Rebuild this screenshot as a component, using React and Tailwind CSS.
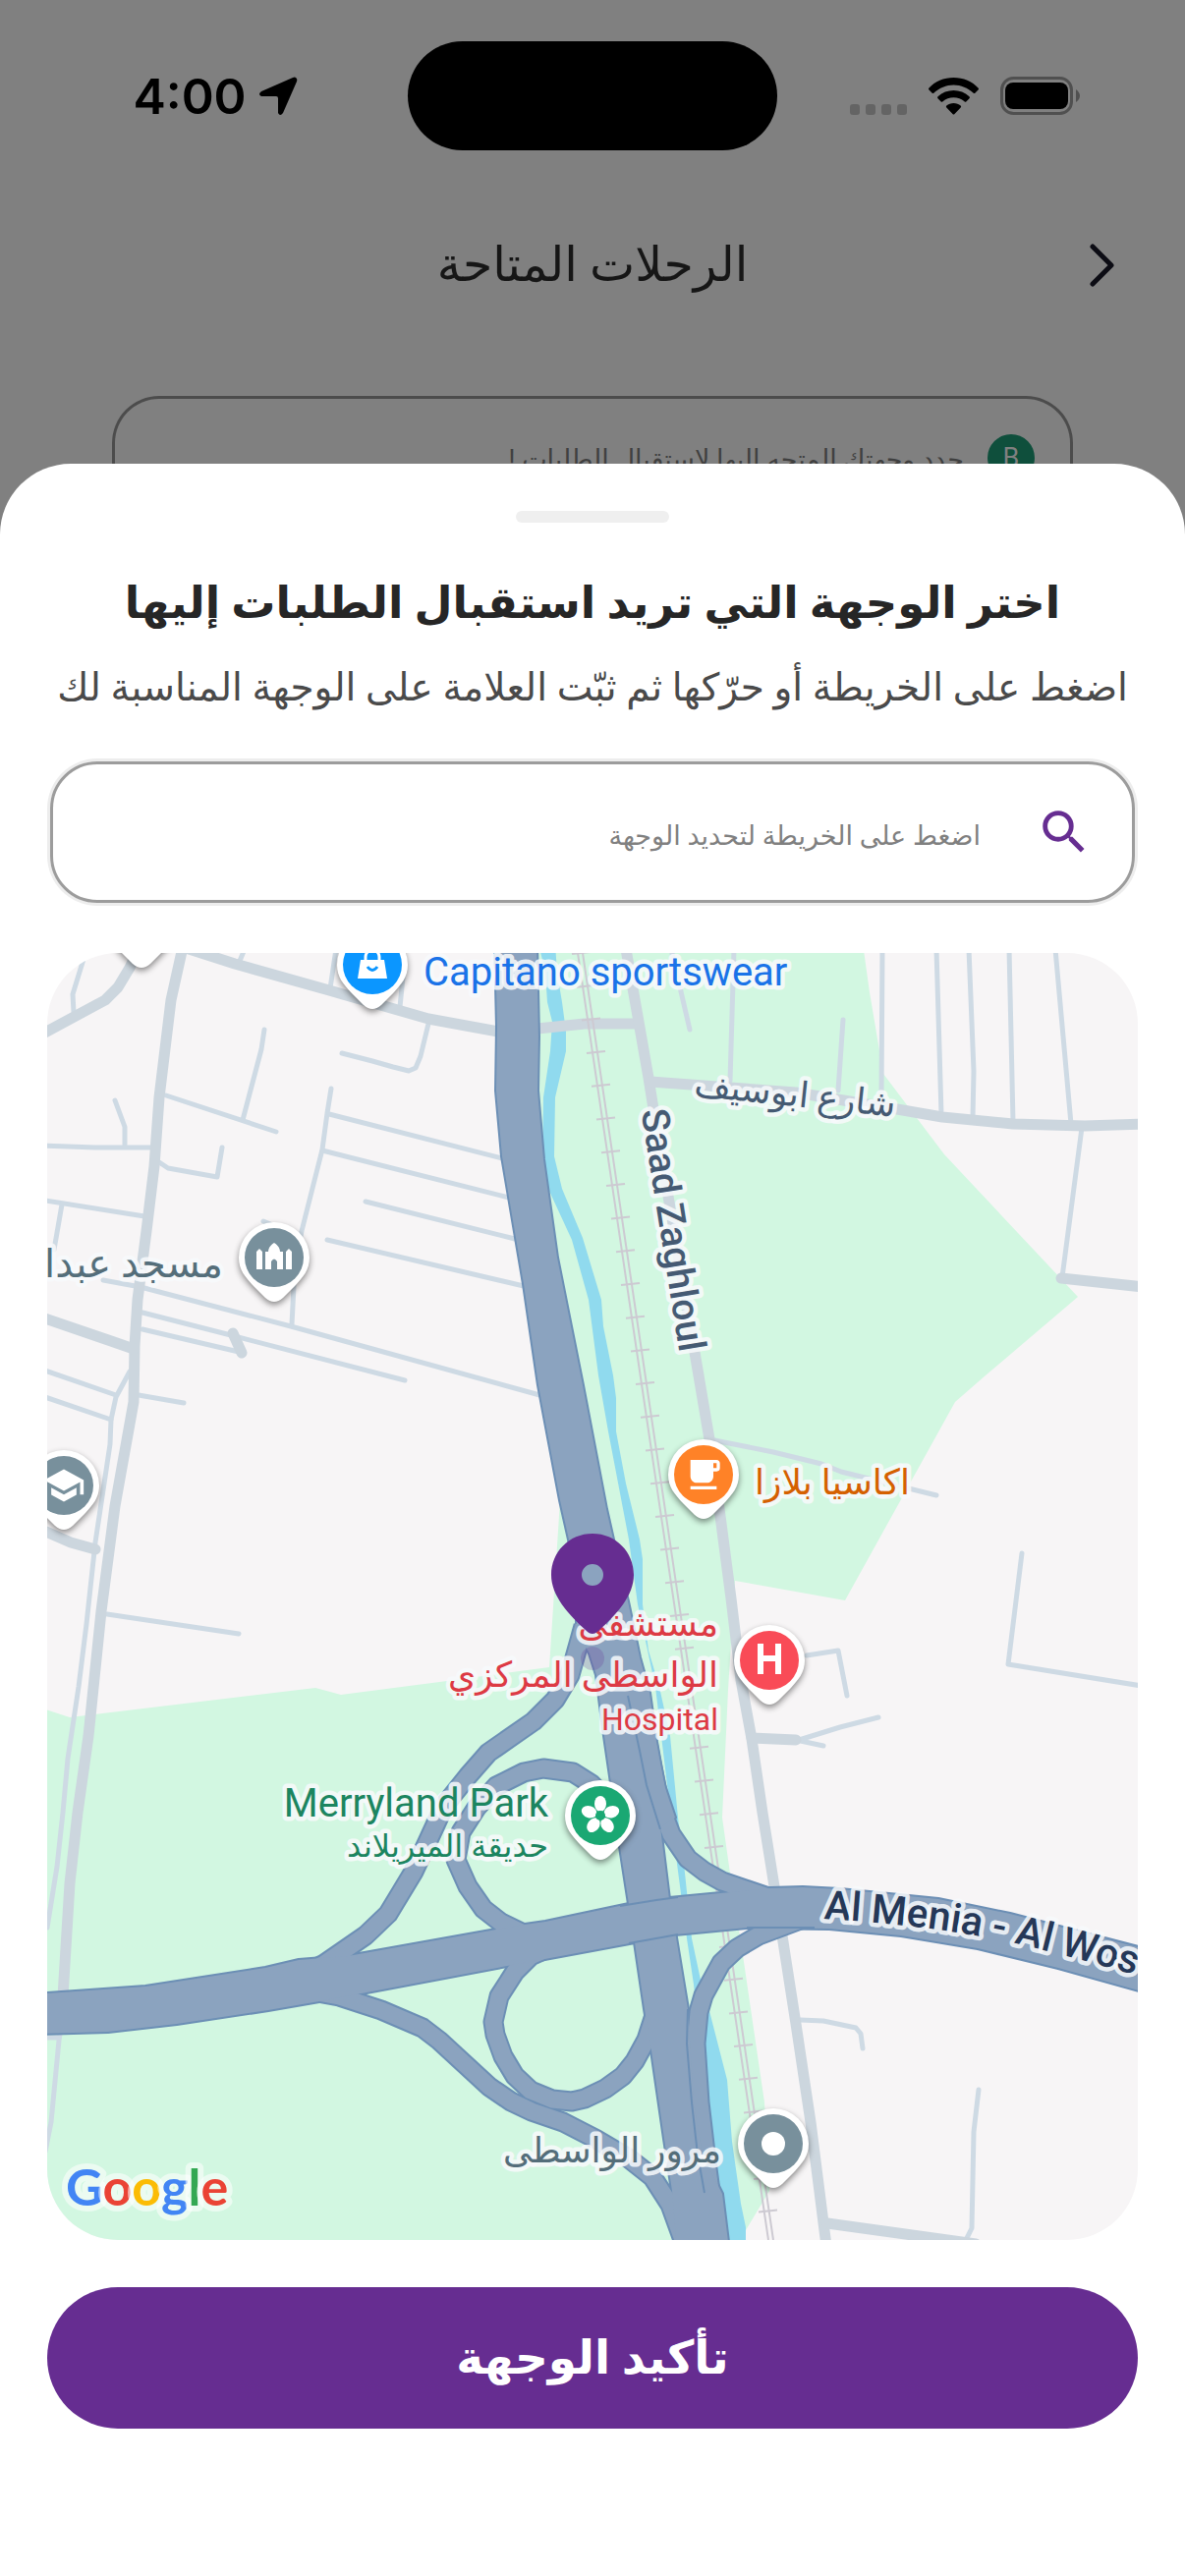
/**
 * 目的地選択画面
 * 地図から受付先の目的地を選ぶボトムシート
 */

import React, { useState } from "react";
import { MdSearch, MdSchool, MdLocalCafe } from "react-icons/md";

// 細い道路
const MINOR_ROADS = [
  "86,973 74,1012 75,1030",
  "249,966 244,978",
  "342,966 336,1006",
  "411,985 407,1025",
  "436,1042 428,1075 423,1087 416,1090 400,1086 379,1080 348,1072",
  "269,1048 266,1068 247,1140",
  "169,1115 281,1152",
  "337,1108 333,1133 328,1170 307,1253 300,1290 297,1348",
  "335,1134 511,1179",
  "328,1171 518,1219",
  "372,1223 524,1261",
  "333,1262 533,1309",
  "117,1120 127,1147 127,1165",
  "40,1166 97,1168 155,1168",
  "162,1183 171,1189 221,1198 226,1168",
  "40,1221 147,1238",
  "63,1226 55,1272",
  "105,1303 143,1310 296,1350 553,1421",
  "145,1336 231,1358 412,1405",
  "145,1353 243,1376",
  "268,1243 275,1246",
  "40,1393 118,1420",
  "40,1420 113,1445",
  "132,1396 118,1422 113,1445 112,1470 97,1570 88,1653 80,1717 69,1790 64,1845 58,1900 48,1962",
  "141,1420 187,1428",
  "109,1643 243,1663",
  "683,966 702,1048",
  "747,966 743,1100",
  "858,1038 853,1110",
  "898,966 897,1118",
  "953,966 958,1134",
  "986,966 991,1090 990,1138",
  "1027,966 1031,1142",
  "1074,966 1090,1144",
  "1101,1148 1081,1300",
  "727,1466 787,1478 836,1490 856,1498 953,1522",
  "821,1685 853,1680 862,1726",
  "810,1772 855,1758 894,1748",
  "810,1771 838,1777",
  "1040,1581 1026,1694 1162,1716",
  "814,2056 838,2057 871,2064 876,2070 878,2085",
  "996,2127 991,2170 989,2268 982,2282",
  "61,2070 60,2077 52,2160 46,2190",
  "44,2074 60,2074",
];

// 中くらいの道路
const MEDIUM_ROADS = [
  "40,1054 107,1018 120,1005 132,985 142,964",
  "186,964 174,1018 162,1117 157,1187 149,1253 140,1323 137,1370 136,1427 117,1533 103,1640 90,1767 79,1845 71,1917 64,2032",
  "186,964 239,981 335,1008 436,1037 507,1050",
  "40,1340 113,1365 136,1373",
  "547,1047 595,1042 649,1042",
  "637,966 650,1040 660,1097 666,1135 711,1400 722,1465 733,1543 744,1627 754,1710 765,1770 776,1845 788,1920 796,1970 810,2060 825,2160 841,2286",
  "662,1101 810,1112 913,1129 959,1137 1031,1144 1104,1146 1164,1144",
  "1080,1301 1164,1310",
  "842,2263 993,2284",
  "40,1556 72,1570 97,1577",
  "765,1769 810,1771",
  "237,1357 246,1377",
];

// 高速道路のランプ
const RAMPS = [
  "594,1655 580,1705 565,1730 543,1752 497,1784 476,1808 452,1838 435,1875 421,1905 395,1948 372,1970 330,1999 300,2014",
  "625,1840 602,1816 583,1804 553,1800 533,1804 505,1818 485,1840 469,1865 464,1893 476,1920 492,1943 510,1957 545,1974 575,1976",
  "290,2022 345,2032 388,2046 430,2064 447,2077 498,2124 520,2139 541,2149 573,2160 606,2177 640,2197 664,2216 682,2244 698,2288",
  "560,1982 540,1991 524,2007 508,2032 502,2058 504,2071 512,2093 524,2113 540,2128 562,2137 582,2139 595,2136 616,2126 634,2113 646,2098 658,2076 668,2045",
  "650,1722 662,1790 672,1838 683,1867 700,1892 717,1905 735,1915 785,1932 810,1936",
  "820,1952 772,1970 750,1983 734,1998 716,2031 711,2048 708,2080 712,2140 719,2200 731,2290",
];

const HIGHWAYS = [
  "504,960 506,1045 505,1110 511,1177 533,1307 548,1410 570,1527 579,1567 587,1620 587,1660 600,1683 607,1705 614,1760 622,1815 631,1880 640,1938 646,1977 656,2045 663,2087 676,2177 684,2230 689,2290 742,2290 735,2233 715,2193 706,2140 700,2045 688,1972 681,1933 672,1860 687,1850 676,1817 668,1773 661,1723 651,1687 639,1630 624,1567 617,1536 593,1410 567,1280 553,1180 547,1110 548,1055 546,960",
  "40,2030 48,2029 148,2022 270,2003 304,1995 354,1991 505,1964 534,1959 555,1956 640,1938 681,1932 744,1926 783,1922 817,1921 855,1923 955,1933 1028,1948 1166,1984 1166,2028 1077,2003 995,1983 917,1970 844,1963 760,1962 687,1969 646,1977 549,1995 516,2001 373,2028 325,2037 273,2046 180,2060 110,2068 40,2070",
];

const GREEN_AREAS =
  "540,960 878,960 885,1010 899,1093 961,1175 1097,1320 1003,1400 972,1427 860,1629 748,1609 741,1720 735,1850 743,1907 756,1990 778,2140 783,2230 759,2270 759,2290 40,2290 40,1738 71,1748 321,1718 347,1725 455,1711 559,1697 564,1620 570,1527 548,1400";

const WATER =
  "548,960 565,960 567,990 572,1020 576,1050 576,1070 565,1117 564,1177 572,1210 593,1260 612,1323 614,1350 624,1400 627,1423 627,1457 637,1510 651,1567 654,1587 654,1633 660,1680 671,1717 682,1767 690,1850 696,1897 704,1973 714,2020 722,2047 740,2117 745,2180 754,2243 759,2267 759,2290 743,2290 720,2150 706,2020 699,1973 689,1897 683,1850 667,1717 649,1633 640,1567 619,1457 609,1400 599,1323 582,1262 558,1210 552,1177 553,1117 560,1070 562,1040 557,1020 555,990";

// 線路の枕木
const RAIL_TIES = Array.from({ length: 39 }, (_, i) => ({
  x: 591 + i * 5,
  y: 970 + i * 33.7,
}));

/**
 * 地図上の白いピン
 * @param {Object} props
 * @param {number} props.x
 * @param {number} props.y
 * @param {string} props.color - 内側の円の色
 */
const PlacePin = ({ x, y, color, children }) => (
  <g transform={`translate(${x} ${y})`}>
    <path
      d="M-36 0A36 36 0 1 1 36 0C36 13 29 20 22 28L9 41Q0 49 -9 41L-22 28C-29 20 -36 13 -36 0Z"
      fill="#fff"
      className="drop-shadow-[0_3px_3px_rgba(0,0,0,0.45)]"
    />
    <circle r="30" fill={color} />
    {children}
  </g>
);

/**
 * 白い縁取り付きの地名ラベル
 */
const MapLabel = ({ className, children, ...rest }) => (
  <text
    stroke="#f8fafc"
    strokeOpacity="0.85"
    strokeWidth="9"
    strokeLinejoin="round"
    paintOrder="stroke"
    className={className}
    {...rest}
  >
    {children}
  </text>
);

const CityMap = () => (
  <svg
    viewBox="48 970 1110 1310"
    className="block w-full h-auto rounded-[72px] bg-[#f7f5f6] font-[Roboto,'DejaVu_Sans',sans-serif]"
  >
    <polygon points={GREEN_AREAS} fill="#d2f7e1" />
    <polygon points={WATER} fill="#90daee" />

    {/* 道路 */}
    <g fill="none" stroke="#cedae4" strokeWidth="5" strokeLinecap="round" strokeLinejoin="round">
      {MINOR_ROADS.map((points) => (
        <polyline key={points} points={points} />
      ))}
    </g>
    <g fill="none" stroke="#ccd6de" strokeWidth="11" strokeLinecap="round" strokeLinejoin="round">
      {MEDIUM_ROADS.map((points) => (
        <polyline key={points} points={points} />
      ))}
    </g>

    {/* 線路 */}
    <g stroke="#cdcad2" strokeWidth="2">
      <path d="M588 970L782 2280M593 970L787 2280" />
      {RAIL_TIES.map(({ x, y }) => (
        <path key={y} d={`M${x - 9} ${y + 1}L${x + 10} ${y - 1}`} />
      ))}
    </g>

    {/* 高速道路 */}
    <g fill="none" stroke="#6c8fb5" strokeLinejoin="round">
      {RAMPS.map((points) => (
        <polyline key={points} points={points} strokeWidth="21" />
      ))}
      {HIGHWAYS.map((points) => (
        <polygon key={points} points={points} strokeWidth="4" />
      ))}
    </g>
    <g fill="#8ba3bf" strokeLinejoin="round">
      {RAMPS.map((points) => (
        <polyline key={points} points={points} fill="none" stroke="#8ba3bf" strokeWidth="17" />
      ))}
      {HIGHWAYS.map((points) => (
        <polygon key={points} points={points} />
      ))}
    </g>
    <g fill="none" stroke="#6c8fb5" strokeWidth="2">
      <path d="M631 1940L668 1934L690 1931M640 1978L690 1969" />
      <path d="M639 1726L651 1782L658 1817L672 1862" />
      <path d="M700 2045L699 2080L704 2140L710 2193L717 2232" />
      <path d="M760 1962L829 1962" />
    </g>

    {/* ラベルとピン */}
    <MapLabel x="431" y="1003" className="text-[40px]" fill="#1a73e8">Capitano sportswear</MapLabel>
    <MapLabel x="227" y="1300" textAnchor="end" className="text-[40px]" fill="#546e7a">مسجد عبدا</MapLabel>
    <MapLabel
      transform="translate(808 1126) rotate(6)"
      textAnchor="middle"
      className="text-[36px] font-medium"
      fill="#455a73"
    >
      شارع ابوسيف
    </MapLabel>
    <MapLabel
      transform="translate(672 1254) rotate(81)"
      textAnchor="middle"
      className="text-[39px] font-medium"
      fill="#455a73"
    >
      Saad Zaghloul
    </MapLabel>
    <MapLabel x="768" y="1521" className="text-[36px]" fill="#d56000">اكاسيا بلازا</MapLabel>
    <g fill="#dd3a44">
      <MapLabel x="731" y="1665" textAnchor="end" className="text-[36px]">مستشفى</MapLabel>
      <MapLabel x="731" y="1717" textAnchor="end" className="text-[36px]">الواسطى المركزي</MapLabel>
      <MapLabel x="731" y="1761" textAnchor="end" className="text-[32px]">Hospital</MapLabel>
    </g>
    <g fill="#1c8560">
      <MapLabel x="558" y="1849" textAnchor="end" className="text-[40px]">Merryland Park</MapLabel>
      <MapLabel x="558" y="1890" textAnchor="end" className="text-[32px]">حديقة الميريلاند</MapLabel>
    </g>
    <MapLabel x="734" y="2201" textAnchor="end" className="text-[36px]" fill="#546e7a">مرور الواسطى</MapLabel>
    <path id="menia-road" d="M838 1953C920 1958 990 1967 1050 1982S1150 2008 1220 2030" fill="none" />
    <MapLabel className="text-[41px] font-medium" fill="#253858">
      <textPath href="#menia-road">Al Menia - Al Wos</textPath>
    </MapLabel>

    <PlacePin x={144} y={940} color="#78909c" />
    <PlacePin x={379} y={982} color="#0b96ff">
      <path d="M-12 -5H12L15 14H-15Z" fill="#fff" />
      <path d="M-7 -3V-8A7 7 0 0 1 7 -8V-3" fill="none" stroke="#fff" strokeWidth="3" />
      <path d="M-5 2Q0 9 5 2" fill="none" stroke="#0b96ff" strokeWidth="3" />
    </PlacePin>
    <PlacePin x={279} y={1280} color="#78909c">
      <path
        d="M-18 12V-6L-15 -9L-12 -6V12ZM12 12V-6L15 -9L18 -6V12ZM-9 12V-6H-6C-6 -10 -3 -13 0 -15C3 -13 6 -10 6 -6H9V12H3V4Q0 -1 -3 4V12Z"
        fill="#fff"
      />
    </PlacePin>
    <PlacePin x={65} y={1512} color="#78909c">
      <MdSchool x="-22" y="-22" size={44} color="#fff" />
    </PlacePin>
    <PlacePin x={716} y={1501} color="#ff8227">
      <MdLocalCafe x="-20" y="-20" size={40} color="#fff" />
    </PlacePin>
    <PlacePin x={783} y={1690} color="#f94b57">
      <path d="M-9 -17V14M9 -17V14M-9 -2H9" fill="none" stroke="#fff" strokeWidth="6" />
    </PlacePin>
    <PlacePin x={611} y={1848} color="#1aa873">
      {[0, 72, 144, 216, 288].map((angle) => (
        <ellipse key={angle} cy="-12" rx="6" ry="8" fill="#fff" transform={`rotate(${angle})`} />
      ))}
      <circle r="5" fill="#1aa873" />
    </PlacePin>
    <PlacePin x={787} y={2182} color="#78909c">
      <circle r="12" fill="#fff" />
    </PlacePin>

    {/* 選択中の位置 */}
    <circle cx="603" cy="1688" r="12" fill="#662d91" opacity="0.22" />
    <path
      d="M603 1561C579 1561 561 1580 561 1603C561 1624 578 1643 598 1661Q603 1665 608 1661C628 1643 645 1624 645 1603C645 1580 627 1561 603 1561ZM603 1592A11 11 0 1 1 603 1614A11 11 0 1 1 603 1592Z"
      fill="#662d91"
      fillRule="evenodd"
    />

    <text
      x="67"
      y="2245"
      stroke="#fff"
      strokeOpacity="0.55"
      strokeWidth="12"
      strokeLinejoin="round"
      paintOrder="stroke"
      className="font-['Lato'] text-[52px] font-bold"
    >
      <tspan fill="#4285f4">G</tspan>
      <tspan fill="#ea4335">o</tspan>
      <tspan fill="#fbbc05">o</tspan>
      <tspan fill="#4285f4">g</tspan>
      <tspan fill="#34a853">l</tspan>
      <tspan fill="#ea4335">e</tspan>
    </text>
  </svg>
);

const StatusBar = () => (
  <div dir="ltr" className="grid grid-cols-3 items-center pt-[42px]">
    <div className="flex items-center justify-center gap-3 pl-9">
      <span className="font-[Inter,sans-serif] text-[50px] leading-none font-semibold text-black">4:00</span>
      <svg viewBox="0 0 40 40" className="size-10">
        <path d="M38 1Q40 2 39 5L25 37Q22 41 20 37V22Q20 20 18 20H3Q-1 18 3 15L35 1Q37 0 38 1Z" />
      </svg>
    </div>
    <div className="mx-auto h-[111px] w-[376px] rounded-full bg-black" />
    <div className="flex items-center justify-center gap-[22px] pr-[46px]">
      <div className="flex gap-[6px] pt-7">
        <i className="h-[11px] w-[10px] rounded-[3px] bg-[#646464]" />
        <i className="h-[11px] w-[10px] rounded-[3px] bg-[#646464]" />
        <i className="h-[11px] w-[10px] rounded-[3px] bg-[#646464]" />
        <i className="h-[11px] w-[10px] rounded-[3px] bg-[#646464]" />
      </div>
      <svg viewBox="0 0 51 38" className="h-[38px] w-[51px]">
        <path d="M25.500 0C35.500 0 44.500 4 50.500 10.500Q51.500 11.500 50.500 12.500L47.500 15.500Q46.500 16.500 45.500 15.500C40 10.500 33 7.500 25.500 7.500S11 10.500 5.500 15.500Q4.500 16.500 3.500 15.500L.5 12.500Q-.5 11.500 .5 10.500C6.500 4 15.500 0 25.500 0Z" />
        <path d="M25.500 13C31.500 13 37 15.200 41.500 19.200Q42.500 20.200 41.500 21.200L38.500 24.200Q37.500 25.200 36.500 24.200C33.500 21.700 29.700 20.300 25.500 20.300S17.500 21.700 14.500 24.200Q13.500 25.200 12.500 24.200L9.500 21.200Q8.500 20.200 9.500 19.200C14 15.200 19.500 13 25.500 13Z" />
        <path d="M25.500 26C28.300 26 30.800 27 32.700 28.600Q33.700 29.600 32.700 30.600L26.500 37Q25.500 38 24.500 37L18.300 30.600Q17.300 29.600 18.300 28.600C20.200 27 22.700 26 25.500 26Z" />
      </svg>
      <svg viewBox="0 0 82 39" className="h-[39px] w-[82px]">
        <rect x="1.500" y="1.500" width="71" height="36" rx="12" fill="none" stroke="#505050" strokeWidth="3" />
        <rect x="5" y="6" width="64" height="27" rx="8" />
        <path d="M77 13Q81 16 81 19.500T77 26Z" fill="#505050" />
      </svg>
    </div>
  </div>
);

const App = () => {
  const [query, setQuery] = useState("");

  return (
    <div
      dir="rtl"
      className="flex min-h-screen flex-col bg-[#808080] font-[Roboto,'DejaVu_Sans',sans-serif]"
    >
      <StatusBar />

      {/* 背面の画面 */}
      <header className="grid grid-cols-[64px_1fr_64px] items-center px-[52px] pt-[77px]">
        <button type="button" aria-label="رجوع" className="flex justify-center">
          <svg viewBox="0 0 26 44" className="h-[44px] w-[26px]">
            <path d="M3 3L22 22L3 41" fill="none" stroke="#0c0c14" strokeWidth="5" strokeLinecap="round" strokeLinejoin="round" />
          </svg>
        </button>
        <h1 className="text-center text-[49px] leading-[80px] font-medium text-[#161616]">الرحلات المتاحة</h1>
      </header>
      <div className="mx-[114px] mt-[93px] flex h-[69px] items-start gap-6 overflow-hidden rounded-t-[48px] border-[3px] border-b-0 border-[#4c4c4c] px-9 pt-9">
        <span className="flex size-12 shrink-0 items-center justify-center rounded-full bg-[#0f4f3c] text-[27px] text-[#808080]">
          B
        </span>
        <p className="text-[27px] leading-[52px] whitespace-nowrap text-[#404040]">
          حدد وجهتك المتجه إليها لاستقبال الطلبات !
        </p>
      </div>

      {/* ボトムシート */}
      <main className="flex grow flex-col rounded-t-[72px] bg-white px-12 pt-12">
        <div className="mx-auto h-3 w-[156px] rounded-[6px] bg-[#efefef]" />
        <h2 className="mt-[46px] text-center text-[45px] leading-[72px] font-bold whitespace-nowrap text-[#262626]">
          اختر الوجهة التي تريد استقبال الطلبات إليها
        </h2>
        <p className="mt-[18px] text-center text-[39px] leading-[64px] whitespace-nowrap text-[#4a4a4a]">
          اضغط على الخريطة أو حرّكها ثم ثبّت العلامة على الوجهة المناسبة لك
        </p>
        <label className="mx-[3px] mt-[43px] flex h-[144px] items-center rounded-[48px] border-[3px] border-[#9c9c9c] px-10 ring-[3px] ring-[#ededed]">
          <MdSearch size={58} color="#662d91" />
          <input
            type="text"
            value={query}
            onChange={(e) => setQuery(e.target.value)}
            placeholder="اضغط على الخريطة لتحديد الوجهة"
            className="mr-14 grow bg-transparent pt-2 text-[27px] outline-none placeholder:text-[#808080]"
          />
        </label>
        <div dir="ltr" className="mt-[51px]">
          <CityMap />
        </div>
        <button
          type="button"
          className="mt-12 mb-[150px] h-[144px] rounded-full bg-[#662d91] text-[47px] font-semibold text-white"
        >
          تأكيد الوجهة
        </button>
      </main>
    </div>
  );
};

export default App;
